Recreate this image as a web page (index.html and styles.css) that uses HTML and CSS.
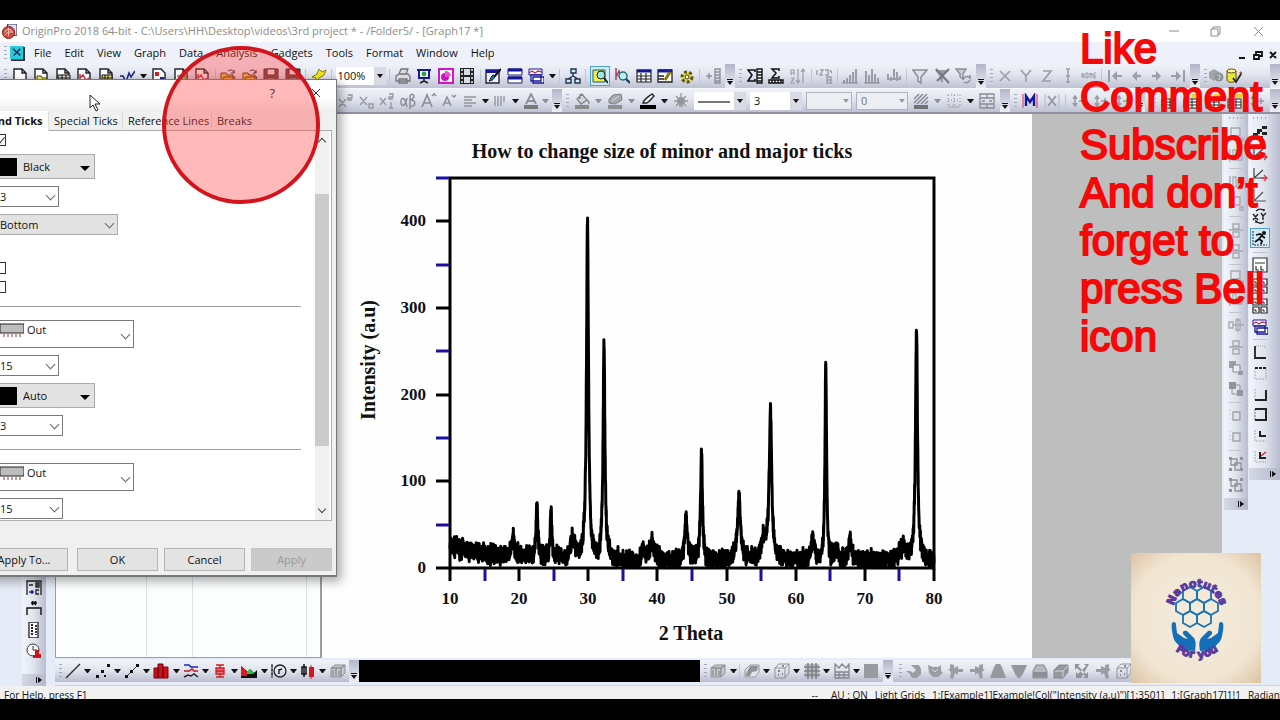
FILE: index.html
```html
<!DOCTYPE html>
<html lang="en">
<head>
<meta charset="utf-8">
<title>OriginPro 2018 64-bit</title>
<link rel="stylesheet" href="styles.css">
</head>
<body>
<svg class="defs" aria-hidden="true">
  <symbol id="doc" viewBox="0 0 16 16"><path d="M2 1h8l4 4v11H2zM10 1v4h4" fill="#fff" stroke="#222" stroke-width="1.4"/></symbol>
  <symbol id="docfolder" viewBox="0 0 16 16"><path d="M2 1h8l4 4v11H2zM10 1v4h4" fill="#fff" stroke="#222" stroke-width="1.4"/><path d="M4 8h4l1 2h5v5H4z" fill="#f0ee3a" stroke="#443" /></symbol>
  <symbol id="docbook" viewBox="0 0 16 16"><path d="M2 1h8l4 4v11H2zM10 1v4h4" fill="#fff" stroke="#222" stroke-width="1.4"/><path d="M3 7h12v8H3zM3 10h12M3 12h12M7 7v8M11 7v8" fill="#ddd" stroke="#111"/></symbol>
  <symbol id="docgraph" viewBox="0 0 16 16"><path d="M2 1h8l4 4v11H2zM10 1v4h4" fill="#fff" stroke="#222" stroke-width="1.4"/><path d="M4 6v8h9M4 10l3-3 3 5 3-2" fill="none" stroke="#c13048" stroke-width="1.4"/></symbol>
  <symbol id="docmatrix" viewBox="0 0 16 16"><path d="M2 1h8l4 4v11H2zM10 1v4h4" fill="#fff" stroke="#222" stroke-width="1.4"/><path d="M4 7h10v8H4zM4 10h10M7 7v8M10 7v8" fill="#f3f07a" stroke="#111"/></symbol>
  <symbol id="func" viewBox="0 0 16 16"><path d="M1 8h3l3 6 3-9 2 4 4-6" fill="none" stroke="#1a2a80" stroke-width="1.6"/></symbol>
  <symbol id="layout" viewBox="0 0 16 16"><path d="M2 1h8l4 4v11H2z" fill="#fff" stroke="#222" stroke-width="1.4"/><path d="M4 4h4v4H4z" fill="#c22"/><path d="M9 9h4v4H9z" fill="#228"/></symbol>
  <symbol id="docnote" viewBox="0 0 16 16"><path d="M2 1h8l4 4v11H2zM10 1v4h4" fill="#fff" stroke="#222" stroke-width="1.4"/><path d="M4 8h6M7 13l3-5h5l-3 5z" fill="#7ac08a" stroke="#243"/></symbol>
  <symbol id="open" viewBox="0 0 16 16"><path d="M1 5h5l1 2h6v8H1zM1 15l3-6h11l-2 6z" fill="#efc13a" stroke="#4b3300"/><path d="M8 3c3-2 5-1 6 2m0-3v3h-3" fill="none" stroke="#222"/></symbol>
  <symbol id="save" viewBox="0 0 16 16"><path d="M1 1h14v14H1z" fill="#7f3c3c" stroke="#222"/><path d="M4 1h8v6H4z" fill="#f7e7e7" stroke="#222"/><path d="M4 10h8v5H4z" fill="#ddd" stroke="#222"/></symbol>
  <symbol id="flash" viewBox="0 0 16 16"><path d="M1 9l5-3 2-5 3 3 4-2-2 5-5 3-4 5 1-5z" fill="#f0e51c" stroke="#8a7b00"/></symbol>
  <symbol id="print" viewBox="0 0 16 16"><path d="M4 6l2-5h7l-2 5M1 8l3-2h9l2 2v5H1zM4 11h8v4H4z" fill="#ddd" stroke="#73767c" stroke-width="1.3"/></symbol>
  <symbol id="slide" viewBox="0 0 16 16"><path d="M1 2h14M3 3v7h10V3" fill="#fff" stroke="#17179a" stroke-width="2"/><path d="M8 10v3M4 15l4-2 4 2" stroke="#222" stroke-width="1.6" fill="none"/><circle cx="8" cy="6" r="2.4" fill="#2aa54a"/></symbol>
  <symbol id="magenta" viewBox="0 0 16 16"><path d="M1 1h14v14H1z" fill="#fff" stroke="#d414c8" stroke-width="2"/><circle cx="7" cy="9" r="4" fill="#c916b6"/><path d="M7 9V3a6 6 0 016 5z" fill="#e64fd8"/></symbol>
  <symbol id="film" viewBox="0 0 16 16"><path d="M1 0h14v16H1z" fill="#222"/><path d="M5 1h6v6H5zM5 9h6v6H5z" fill="#d9dde4"/><path d="M3 1v14M13 1v14" stroke="#e5e7ee" stroke-width="1.6" stroke-dasharray="2 2"/></symbol>
  <symbol id="edit" viewBox="0 0 16 16"><path d="M1 2h13v13H1z" fill="#eef" stroke="#223" stroke-width="1.4"/><path d="M1 2h13v3H1z" fill="#17179a"/><path d="M16 1L9 9" stroke="#111" stroke-width="2"/><path d="M10 8c-1 4-4 5-6 5 2-2 2-5 4-6z" fill="#167f8e" stroke="#111"/></symbol>
  <symbol id="split" viewBox="0 0 16 16"><path d="M1 1h14v6H1zM1 9h14v6H1z" fill="#fff" stroke="#1b2065"/><path d="M1 2h14M1 10h14" stroke="#14159b" stroke-width="3"/></symbol>
  <symbol id="cascade" viewBox="0 0 16 16"><path d="M1 1h13v6H1z" fill="#fff" stroke="#17179a"/><path d="M1 5l3-2 3 2 3-2 4 1" fill="none" stroke="#c13060" stroke-width="1.4"/><path d="M3 7h10v6H3zM5 9h11v6H5z" fill="#fff" stroke="#17179a" stroke-width="1.3"/></symbol>
  <symbol id="tree" viewBox="0 0 16 16"><path d="M6 1h5v4H6zM1 11h5v4H1zM10 11h5v4h-5zM8 5v3M3 11l5-3 5 3" fill="#dfeaf0" stroke="#1b3550" stroke-width="1.4"/></symbol>
  <symbol id="find" viewBox="0 0 16 16"><path d="M1 2h12v12H1z" fill="#f0ee4a" stroke="#14597a"/><circle cx="9" cy="7" r="4" fill="#9de4e4" stroke="#222"/><path d="M12 10l4 5" stroke="#222" stroke-width="2"/></symbol>
  <symbol id="zoomg" viewBox="0 0 16 16"><path d="M2 0v12M2 9l3-6 2 7" fill="none" stroke="#a3405c" stroke-width="1.5"/><circle cx="9" cy="8" r="4" fill="#bfeef0" stroke="#286b79" stroke-width="1.5"/><path d="M12 11l4 4" stroke="#163545" stroke-width="2"/></symbol>
  <symbol id="table" viewBox="0 0 16 16"><path d="M1 2h14v12H1zM1 8h14M1 11h14M5 5v9M10 5v9" fill="#fff" stroke="#222" stroke-width="1.2"/><path d="M1 3h14" stroke="#17179a" stroke-width="3"/></symbol>
  <symbol id="tablepen" viewBox="0 0 16 16"><path d="M1 2h14v12H1zM1 8h6M1 11h6" fill="#fff" stroke="#222" stroke-width="1.3"/><path d="M1 3h14" stroke="#17179a" stroke-width="3"/><path d="M13 4l-5 8" stroke="#8a7b00" stroke-width="3"/></symbol>
  <symbol id="gear" viewBox="0 0 16 16"><circle cx="8" cy="9" r="5" fill="#ece63a" stroke="#5d5710" stroke-width="3" stroke-dasharray="3 2"/><circle cx="8" cy="9" r="2" fill="#fff" stroke="#333"/></symbol>
  <symbol id="addcol" viewBox="0 0 16 16"><path d="M1 8h6M4 5v6M10 1h5v14h-5zM10 4h5M10 7h5M10 10h5M10 13h5" fill="none" stroke="#8f9298" stroke-width="1.4"/></symbol>
  <symbol id="sumcol" viewBox="0 0 16 16"><path d="M8 4V2H1l4 5-4 6h7v-2" fill="none" stroke="#111" stroke-width="1.6"/><path d="M10 1h5v14h-5zM10 4h5M10 7h5M10 10h5M10 13h5" fill="#fff" stroke="#111" stroke-width="1.4"/></symbol>
  <symbol id="sumrow" viewBox="0 0 16 16"><path d="M11 3V1H4l4 4-4 5h7V8" fill="none" stroke="#111" stroke-width="1.5"/><path d="M1 12h14v3H1zM4 12v3M7 12v3M10 12v3M13 12v3" fill="#fff" stroke="#111" stroke-width="1.4"/></symbol>
  <symbol id="sort" viewBox="0 0 16 16"><path d="M1 7V2h3v5M1 5h3M1 10h3l-3 5h4M8 1v13M6 12l2 3 2-3M13 15V2M11 4l2-3 2 3" fill="none" stroke="#9b9ea5" stroke-width="1.2"/></symbol>
  <symbol id="fill" viewBox="0 0 16 16"><path d="M1 2v5M4 2h3L4 7h3M9 2h3v5H9M11 9h4v6h-4zM11 12h4M14 2l2 3" fill="none" stroke="#9b9ea5" stroke-width="1.4"/></symbol>
  <symbol id="stairs" viewBox="0 0 16 16"><path d="M2 15v-3M5 15v-5M8 15V7M11 15V4M14 15V1" stroke="#9b9ea5" stroke-width="2"/><path d="M0 15h16" stroke="#85888e"/></symbol>
  <symbol id="bars" viewBox="0 0 16 16"><path d="M2 15V3M5 15V7M8 15V1M11 15V6M14 15v-5" stroke="#9b9ea5" stroke-width="2"/><path d="M0 15h16" stroke="#85888e"/></symbol>
  <symbol id="hist" viewBox="0 0 16 16"><path d="M2 6v6M5 9v4M8 1v10M11 4v9M14 8v4M1 11h14" stroke="#9b9ea5" stroke-width="2"/></symbol>
  <symbol id="filter" viewBox="0 0 16 16"><path d="M1 2h14L9 9v6l-3-2V9z" fill="#dfe1e8" stroke="#8b8e95" stroke-width="1.5"/></symbol>
  <symbol id="nofilter" viewBox="0 0 16 16"><path d="M1 2h14L9 9v6l-3-2V9z" fill="#9b9ea5"/><path d="M2 1l13 14M15 1L3 13" stroke="#777a80" stroke-width="2"/></symbol>
  <symbol id="refilter" viewBox="0 0 16 16"><path d="M1 1h10L8 6v5l-3-2V6z" fill="#c9ccd3" stroke="#8b8e95" stroke-width="1.4"/><path d="M8 12a4 4 0 017-2v-3M15 12a4 4 0 01-6 2" fill="none" stroke="#8b8e95" stroke-width="1.5"/></symbol>
  <symbol id="lx" viewBox="0 0 16 16"><path d="M3 3l10 10M13 3L3 13" stroke="#9b9ea5" stroke-width="1.6"/></symbol>
  <symbol id="ly" viewBox="0 0 16 16"><path d="M3 2l5 6 5-6M8 8v6" fill="none" stroke="#9b9ea5" stroke-width="1.7"/></symbol>
  <symbol id="lz" viewBox="0 0 16 16"><path d="M4 3h8L4 13h8" fill="none" stroke="#9b9ea5" stroke-width="1.7"/></symbol>
  <symbol id="err" viewBox="0 0 16 16"><path d="M8 1v13M6 1h4M6 14h4M6 8h4" stroke="#9b9ea5" stroke-width="1.5"/></symbol>
  <symbol id="none" viewBox="0 0 16 16"><path d="M1 10V5l2 5V5M5 5h2v5H5zM9 10V5l1 2 1-2v5M15 5h-2v5h2M13 8h2" fill="none" stroke="#9b9ea5"/></symbol>
  <symbol id="first" viewBox="0 0 16 16"><path d="M2 2v12M15 8H6" stroke="#9b9ea5" stroke-width="2"/><path d="M10 3L5 8l5 5z" fill="#9b9ea5"/></symbol>
  <symbol id="prev" viewBox="0 0 16 16"><path d="M13 8H6" stroke="#9b9ea5" stroke-width="2.400"/><path d="M9 3L4 8l5 5z" fill="#9b9ea5"/></symbol>
  <symbol id="next" viewBox="0 0 16 16"><path d="M3 8h7" stroke="#9b9ea5" stroke-width="2.400"/><path d="M7 3l5 5-5 5z" fill="#9b9ea5"/></symbol>
  <symbol id="last" viewBox="0 0 16 16"><path d="M14 2v12M1 8h9" stroke="#9b9ea5" stroke-width="2"/><path d="M6 3l5 5-5 5z" fill="#9b9ea5"/></symbol>
  <symbol id="cubes" viewBox="0 0 16 16"><path d="M1 4l5-3 5 3v6l-5 3-5-3z" fill="#a2a4aa"/><circle cx="11" cy="9" r="4.5" fill="#8f9297"/><path d="M9 8c1-2 4-1 3 1l-1 1v2" stroke="#ddd" fill="none"/></symbol>
  <symbol id="db" viewBox="0 0 16 16"><path d="M1 3v9c0 3 9 3 9 0V3" fill="#ebe63a" stroke="#55510d"/><ellipse cx="5.500" cy="3" rx="4.500" ry="2" fill="#fbf98c" stroke="#55510d"/><path d="M7 10l3 4 5-8" fill="none" stroke="#222" stroke-width="1.8"/><path d="M14 4l2 2" stroke="#c33" stroke-width="2"/></symbol>

  <symbol id="sup" viewBox="0 0 16 16"><path d="M1 6l7 8M8 6l-7 8M10 2h4v3h-4v2h4" fill="none" stroke="#95989e" stroke-width="1.4"/></symbol>
  <symbol id="sub" viewBox="0 0 16 16"><path d="M1 4l7 8M8 4l-7 8M10 11h4v4h-4z" fill="none" stroke="#95989e" stroke-width="1.3"/></symbol>
  <symbol id="supsub" viewBox="0 0 16 16"><path d="M1 5l6 7M7 5l-6 7M10 1h4v3h-4v2h4M12 9v6M10 15h4" fill="none" stroke="#95989e" stroke-width="1.3"/></symbol>
  <symbol id="greek" viewBox="0 0 16 16"><path d="M7 5c-2 9-6 9-6 4s4-6 6 5M10 16V4c0-4 5-3 4 0l-3 3c5 0 5 7 0 6" fill="none" stroke="#8c8f95" stroke-width="1.5"/></symbol>
  <symbol id="abig" viewBox="0 0 16 16"><path d="M1 14L6 2l5 12M3 10h6M11 3l2-2 2 2" fill="none" stroke="#8c8f95" stroke-width="1.7"/></symbol>
  <symbol id="asmall" viewBox="0 0 16 16"><path d="M2 13L6 4l4 9M4 10h4M11 2l2 2 2-2" fill="none" stroke="#8c8f95" stroke-width="1.5"/></symbol>
  <symbol id="align" viewBox="0 0 16 16"><path d="M2 4h12M2 7h8M2 10h12M2 13h8" stroke="#92959b" stroke-width="1.4"/></symbol>
  <symbol id="cols" viewBox="0 0 16 16"><path d="M3 3v10M6 3v10M9 3v10M12 3v6" stroke="#92959b" stroke-width="1.4"/></symbol>
  <symbol id="acolor" viewBox="0 0 16 16"><path d="M3 11L8 1l5 10M5 8h6" fill="none" stroke="#8c8f95" stroke-width="1.8"/><path d="M1 12h14v4H1z" fill="#77797d"/></symbol>
  <symbol id="bucket" viewBox="0 0 16 16"><path d="M3 6l5-5 5 6-6 4zM6 1v5M12 7c2 0 3 1 3 4" fill="#d2d5dc" stroke="#85888e" stroke-width="1.4"/><path d="M1 12h14v4H1z" fill="#8c8a8c"/></symbol>
  <symbol id="palette" viewBox="0 0 16 16"><path d="M2 6l4-4 8-1 1 6-7 4-6-1z" fill="#a5a8ad" stroke="#7f8288"/><path d="M5 8l7-5" stroke="#ddd"/><path d="M1 12h14v4H1z" fill="#8c8f94"/></symbol>
  <symbol id="pen" viewBox="0 0 16 16"><path d="M3 10c1-4 5-6 9-9l2 2c-4 4-6 8-9 7z" fill="#fff" stroke="#222" stroke-width="1.4"/><path d="M0 12h16v4H0z" fill="#000"/></symbol>
  <symbol id="bulb" viewBox="0 0 16 16"><circle cx="8" cy="8" r="4" fill="#94979c"/><path d="M8 0v4M1 8h14M3 3l10 10M13 3L3 13M6 13h4" stroke="#94979c" stroke-width="1.3"/></symbol>
  <symbol id="hatch" viewBox="0 0 16 16"><path d="M1 6l5-5M1 10l9-9M4 11L14 1M8 11l7-7M12 11l3-3" stroke="#888b91" stroke-width="1.5"/><path d="M1 12h14v4H1z" fill="#707277"/></symbol>
  <symbol id="border" viewBox="0 0 16 16"><path d="M2 2h12v11H2zM8 2v11M2 7h12" fill="none" stroke="#888b91" stroke-dasharray="1 2"/><path d="M2 14h12" stroke="#aaa"/></symbol>
  <symbol id="merge" viewBox="0 0 16 16"><path d="M1 1h14v14H1zM1 5h14M1 11h14M8 1v4M8 11v4M3 8h3M10 8h3" fill="none" stroke="#898c92" stroke-width="1.3"/></symbol>
  <symbol id="mask" viewBox="0 0 16 16"><path d="M4 13V3l4 6 4-6v10" fill="none" stroke="#1415a0" stroke-width="2.400"/><path d="M1 1v14M15 1v14" stroke="#e22a50"/></symbol>
  <symbol id="unmask" viewBox="0 0 16 16"><path d="M4 3l8 10M12 3L4 13" stroke="#96999f" stroke-width="2"/><path d="M1 1v14M15 1v14" stroke="#b5b8be"/></symbol>
  <symbol id="updown" viewBox="0 0 16 16"><path d="M4 4v8M2 6l2-3 2 3M2 10l2 3 2-3M8 8h7M12 5v6" fill="none" stroke="#96999f" stroke-width="1.4"/></symbol>
  <symbol id="tbl" viewBox="0 0 16 16"><path d="M1 6h13v9H1zM1 9h13M1 12h13M5 6v9M9 6v9" fill="#fff" stroke="#222"/><path d="M9 1h6v4H9z" fill="#f5cf22"/></symbol>

  <symbol id="g1" viewBox="0 0 16 16"><path d="M3 2h9v8H3zM1 13h3M12 12h3v3h-3z" fill="none" stroke="#a6a9af" stroke-width="1.4"/></symbol>
  <symbol id="g2" viewBox="0 0 16 16"><path d="M2 2v13M5 3h3v10H5zM10 6h4v7h-4z" fill="none" stroke="#a6a9af" stroke-width="1.3"/></symbol>
  <symbol id="g3" viewBox="0 0 16 16"><path d="M5 2h6v5H5zM5 10h6v5H5zM1 8h14" fill="none" stroke="#a6a9af" stroke-width="1.4"/></symbol>
  <symbol id="g4" viewBox="0 0 16 16"><path d="M1 5h4v6H1zM8 3h4v10H8zM5 8h11M10 1v14" fill="#e7ebf2" stroke="#a6a9af" stroke-width="1.3"/></symbol>
  <symbol id="g5" viewBox="0 0 16 16"><path d="M1 1h7v7H1zM10 11h5v4h-5z" fill="#9c9ea3"/><path d="M5 5h7v7H5z" fill="#e9edf3" stroke="#85878c"/></symbol>
  <symbol id="g6" viewBox="0 0 16 16"><path d="M1 1h7v7H1zM9 9h6v6H9z" fill="#939599"/><path d="M8 4h4v5M4 8v5h5" fill="none" stroke="#939599"/></symbol>
  <symbol id="g7" viewBox="0 0 16 16"><path d="M5 4h7v8H5z" fill="none" stroke="#a0a3a8" stroke-width="1.4"/><path d="M2 2v12" stroke="#b7babf" stroke-dasharray="1 3"/></symbol>
  <symbol id="g8" viewBox="0 0 16 16"><path d="M3 3h6v6H3zM7 7h6v7H7z" fill="none" stroke="#8f9297" stroke-width="1.3"/><path d="M1 1h3v3H1zM12 1h3v3h-3zM1 12h3v3H1zM12 12h3v3h-3z" fill="#8f9297"/></symbol>

  <symbol id="checker" viewBox="0 0 16 16"><path d="M10 1h5v3h-5zM5 4h5v3H5zM10 7h5v3h-5zM1 8h5v3H1zM6 11h5v3H6zM5 7h3v2H5z" fill="#222"/></symbol>
  <symbol id="axes" viewBox="0 0 16 16"><path d="M2 1v10h12M2 11L11 3" fill="none" stroke="#444" stroke-width="1.2"/><path d="M9 11h6M12 8l3 3-3 3" fill="none" stroke="#d43a4a" stroke-width="1.3"/></symbol>
  <symbol id="axis" viewBox="0 0 16 16"><path d="M2 2v12h12M2 14L11 5" fill="none" stroke="#555" stroke-width="1.2"/></symbol>
  <symbol id="xy" viewBox="0 0 16 16"><path d="M1 6l5 6M6 6l-5 6M9 5l2 3 3-3M11 8v4M4 3c3-3 7-2 8 0V1M12 14c-3 2-6 1-8-1v2" fill="none" stroke="#222" stroke-width="1.4"/></symbol>
  <symbol id="run" viewBox="0 0 16 16"><path d="M1 1v14h14" stroke="#222" fill="none" stroke-dasharray="2 1"/><circle cx="12" cy="3" r="2" fill="#111"/><path d="M4 5l4-1 2 1-3 4 3 2-1 3M7 9l-4 3M10 6l3 2" fill="none" stroke="#111" stroke-width="1.8"/></symbol>
  <symbol id="panel1" viewBox="0 0 16 16"><path d="M1 1h14v14H1zM3 6h10M4 9v4h3M9 9v4h3" fill="#fff" stroke="#333" stroke-width="1.2"/></symbol>
  <symbol id="panel4" viewBox="0 0 16 16"><path d="M1 1h6v6H1zM9 1h6v6H9zM1 9h6v6H1zM9 9h6v6H9z" fill="#fff" stroke="#222" stroke-width="1.2"/><path d="M3 3v2h2M11 3v2h2M3 11v2h2M11 11v2h2" stroke="#222" fill="none"/></symbol>
  <symbol id="axl" viewBox="0 0 16 16"><path d="M13 4V2H3" fill="none" stroke="#aaa" stroke-dasharray="1 1"/><path d="M3 2v12h11" fill="none" stroke="#222" stroke-width="1.8"/></symbol>
  <symbol id="axt" viewBox="0 0 16 16"><path d="M3 3v11h11V3" fill="none" stroke="#aaa" stroke-dasharray="2 1"/><path d="M3 3h11" stroke="#222" stroke-width="2" stroke-dasharray="3 1"/></symbol>
  <symbol id="axb" viewBox="0 0 16 16"><path d="M3 3v11" stroke="#aaa" stroke-dasharray="2 1"/><path d="M3 14h11V4" fill="none" stroke="#222" stroke-width="2"/></symbol>
  <symbol id="axf" viewBox="0 0 16 16"><path d="M3 3v11" stroke="#666" stroke-dasharray="2 1"/><path d="M3 3h11v11H3" fill="none" stroke="#222" stroke-width="2"/></symbol>
  <symbol id="axc" viewBox="0 0 16 16"><path d="M3 3v11h11" fill="none" stroke="#aaa" stroke-dasharray="2 1"/><path d="M8 4v5h6" fill="none" stroke="#222" stroke-width="2"/></symbol>
  <symbol id="axd" viewBox="0 0 16 16"><path d="M3 3v11h11" fill="none" stroke="#aaa" stroke-dasharray="2 1"/><path d="M8 4v6h6" fill="none" stroke="#222" stroke-width="2"/><path d="M9 8l5-4" stroke="#d22" stroke-width="1.5"/></symbol>

  <symbol id="legend" viewBox="0 0 16 16"><path d="M1 15V1h14v14M3 5h4M10 3h3v4h-3zM10 5h3M13 10h-3v4h3" fill="none" stroke="#222" stroke-width="1.3"/><path d="M3 12h5M6 10v4" stroke="#1721b5" stroke-width="1.6"/></symbol>
  <symbol id="star" viewBox="0 0 16 16"><path d="M5 2h6M6 0l4 4M10 0L6 4" stroke="#111" stroke-width="1.4"/><path d="M1 14V7h14v7" fill="none" stroke="#111" stroke-width="1.4"/></symbol>
  <symbol id="scale" viewBox="0 0 16 16"><path d="M3 0h9v16H3z" fill="#fff" stroke="#222" stroke-width="1.3"/><path d="M5 3h2M5 6h3M5 9h2M5 12h3M10 3v10" stroke="#222" stroke-width="1.8" stroke-dasharray="2 1"/></symbol>
  <symbol id="clock" viewBox="0 0 16 16"><circle cx="7" cy="7" r="6" fill="#fff" stroke="#333"/><path d="M7 3v4h4" stroke="#333" fill="none"/><path d="M9 7h4v4h2v4H7v-3h2z" fill="#c8141c"/></symbol>

  <symbol id="line" viewBox="0 0 16 16"><path d="M1 15L15 1" stroke="#333" stroke-width="1.4"/></symbol>
  <symbol id="scatter" viewBox="0 0 16 16"><path d="M1 12h3v3H1zM6 7h3v3H6zM9 12h2v2H9zM12 1h3v3h-3z" fill="#111"/></symbol>
  <symbol id="linesym" viewBox="0 0 16 16"><path d="M2 14L14 2" stroke="#333"/><path d="M1 12h3v3H1zM6 7h3v3H6zM12 1h3v3h-3z" fill="#111"/></symbol>
  <symbol id="column" viewBox="0 0 16 16"><path d="M1 5h4v10H1zM5 1h5v14H5zM10 4h5v11h-5z" fill="#c9131b" stroke="#701" /></symbol>
  <symbol id="multi" viewBox="0 0 16 16"><path d="M1 2h5l2 2h7" stroke="#1a27ba" fill="none" stroke-width="1.5"/><path d="M1 8h5l3-2 2 2h4" stroke="#c8141c" fill="none" stroke-width="1.5"/><path d="M1 14l4-2 3 1 3-2 4 3" stroke="#222" fill="none" stroke-width="1.5"/></symbol>
  <symbol id="box" viewBox="0 0 16 16"><path d="M4 2h8M8 2v3M4 5h8v6H4zM4 8h8M8 11v3M4 14h8" fill="#e77" stroke="#cf1b22" stroke-width="1.3"/></symbol>
  <symbol id="area" viewBox="0 0 16 16"><path d="M0 15V3l7 6 2-3 4 4 3-3v8z" fill="#111"/><path d="M0 3l6 6v4H0z" fill="#e01921"/><path d="M6 9l3-3 4 5H6z" fill="#24c936"/></symbol>
  <symbol id="polar" viewBox="0 0 16 16"><path d="M1 1v14M0 3h2M0 7h2M0 11h2" stroke="#222"/><circle cx="9" cy="8" r="6" fill="none" stroke="#222" stroke-width="1.3"/><path d="M8 11V6M8 7l3-1" stroke="#222" fill="none" stroke-width="1.4"/></symbol>
  <symbol id="candle" viewBox="0 0 16 16"><path d="M4 1v13M2 4h4v7H2z" fill="#fff" stroke="#111" stroke-width="1.5"/><path d="M11 2v14" stroke="#d3161d"/><path d="M9 4h5v10H9z" fill="#d3161d"/></symbol>
  <symbol id="cube3" viewBox="0 0 16 16"><path d="M1 5l4-3h10v8l-4 4H1z" fill="#c6c8cc" stroke="#8c8f94"/><path d="M3 13V7M6 13V5M9 13V8M11 5v9M1 5h10l4-3" stroke="#8c8f94" fill="none" stroke-width="1.4"/></symbol>
  <symbol id="surf" viewBox="0 0 16 16"><path d="M1 7l5-5h9v7l-4 5H1z" fill="#e3e5ea" stroke="#909398"/><path d="M2 11l4-8h8l-1 5-5 1-2 4H2z" fill="#8f9297"/></symbol>
  <symbol id="dots3" viewBox="0 0 16 16"><path d="M1 5l4-4h10v9l-4 5H1zM1 5h10v10M11 5l4-4" fill="none" stroke="#909398"/><path d="M4 8h2M8 11h1M4 12h1M8 3h2" stroke="#85888d" stroke-width="2"/></symbol>
  <symbol id="heat" viewBox="0 0 16 16"><path d="M1 1h14v14H1z" fill="#b8babf"/><path d="M4 0v16M8 0v16M12 0v16M0 4h16M0 8h16M0 12h16" stroke="#7e8186" stroke-width="1.5"/></symbol>
  <symbol id="wave" viewBox="0 0 16 16"><path d="M1 9V1l4 4 3-4 4 4 3-4v8M1 9h14v6H1zM1 12h14M5 9v6M10 9v6" fill="none" stroke="#85888d" stroke-width="1.3"/></symbol>
  <symbol id="solid" viewBox="0 0 16 16"><path d="M1 1h14v14H1z" fill="#999ba0"/></symbol>
  <symbol id="rotl" viewBox="0 0 16 16"><path d="M5 2h8l2 4v5l-4 4H6l-2-4-4-3h4l3 2 3-3z" fill="#9b9da2"/></symbol>
  <symbol id="rotr" viewBox="0 0 16 16"><path d="M1 2l5 2h5l3-2v6l2 2-5 4H6l-4-4z" fill="#9b9da2"/><path d="M5 6l3 3 3-3" fill="none" stroke="#d9dbe1"/></symbol>
  <symbol id="tiltl" viewBox="0 0 16 16"><path d="M2 1l4 1v3l4-2v3h5v3h-5v3L7 10l-2 6-3-1 1-6-3-3h2z" fill="#9b9da2"/></symbol>
  <symbol id="tiltr" viewBox="0 0 16 16"><path d="M14 1l-4 1v3L6 3v3H1v3h5v3l3-2 2 6 3-1-1-6 3-3h-2z" fill="#9b9da2"/></symbol>
  <symbol id="persp" viewBox="0 0 16 16"><path d="M4 4l2-3h4l2 3 4 11H0z" fill="#96989d"/></symbol>
  <symbol id="trap" viewBox="0 0 16 16"><path d="M0 2h16l-4 9-3 4H7l-3-4z" fill="#96989d"/></symbol>
  <symbol id="boxup" viewBox="0 0 16 16"><path d="M1 8l3-6h8l3 6v7H1z" fill="#b5b7bc" stroke="#85888d"/><path d="M1 9h14v5H1z" fill="#8d9095"/></symbol>
  <symbol id="boxr" viewBox="0 0 16 16"><path d="M1 7l5-5h9v7l-5 6H1z" fill="#96989d" stroke="#85888d"/><path d="M2 8h8v6M10 8l5-5" fill="none" stroke="#d5d7dc"/></symbol>
  <symbol id="expand" viewBox="0 0 16 16"><path d="M1 1h5L4 3l8 8 2-2v6H9l2-2-8-8-2 2zM15 1h-5l2 2-8 8-2-2v6h5" fill="#919398"/></symbol>
</svg>

<div class="app">
  <header class="title">
    <svg class="logo-s" viewBox="0 0 16 16"><path d="M6 0h10v12H6z" fill="#d9e2fb" stroke="#224"/><circle cx="7" cy="9" r="6.500" fill="#d9483c" stroke="#7d1815"/><path d="M3 9c2-5 7-4 8 0M3 12c3-4 5-4 8-3M7 4v9" fill="none" stroke="#fbd3c8"/></svg>
    <span>OriginPro 2018 64-bit - C:\Users\HH\Desktop\videos\3rd project * - /Folder5/ - [Graph17 *]</span>
    <svg class="winctl" viewBox="0 0 100 14"><path d="M1 7h10M43 5h7v7h-7zM45 5V3h7v7h-2M86 3l9 9M95 3l-9 9" fill="none" stroke="#8a8a8a"/></svg>
  </header>
  <nav class="menu">
    <span class="grip"></span>
    <svg class="logo-s" viewBox="0 0 16 16"><path d="M0 0h15v14H0z" fill="#2cc9dc"/><path d="M1 15h14V1" fill="none" stroke="#333" stroke-width="2"/><path d="M3 3l8 7M11 3l-7 7" stroke="#225" stroke-width="1.5"/></svg>
    <a href="#">File</a><a href="#">Edit</a><a href="#">View</a><a href="#">Graph</a><a href="#">Data</a><a href="#">Analysis</a><a href="#">Gadgets</a><a href="#">Tools</a><a href="#">Format</a><a href="#">Window</a><a href="#">Help</a>
    <svg class="mdictl" viewBox="0 0 40 12"><path d="M1 9h6M16 6h5v4h-5zM18 6V3h6v4h-3M32 3l6 6M38 3l-6 6" fill="none" stroke="#111" stroke-width="1.800"/></svg>
  </nav>
  <div class="row row1">
    <div class="group">
      <span class="tools" data-tools="grip doc docfolder docbook docgraph docmatrix func v layout docnote docgraph | open open save save | flash |"></span>
      <span class="pick zoom"><select aria-label="Zoom"><option>100%</option></select></span>
      <span class="tools" data-tools="| print slide magenta film | edit split cascade v | tree | find* zoomg table tablepen gear | addcol more"></span>
    </div>
    <div class="group"><span class="tools" data-tools="grip sumcol sumrow sort | fill | stairs bars hist | filter nofilter refilter more"></span></div>
    <div class="group"><span class="tools" data-tools="grip lx ly lz err none | first prev next last more"></span></div>
    <div class="group"><span class="tools" data-tools="grip cubes db"></span><span class="fill"></span><span class="tools" data-tools="more"></span></div>
  </div>
  <div class="row row2">
    <div class="group"></div>
    <div class="group"><span class="tools" data-tools="sup sub supsub greek abig asmall align v cols v acolor w more"></span></div>
    <div class="group">
      <span class="tools" data-tools="grip bucket w palette w pen v bulb"></span>
      <span class="pick stroke"><select aria-label="Line style"><option></option></select></span>
      <span class="pick"><select aria-label="Line width"><option>3</option></select></span>
      <span class="pick off narrow"><select aria-label="Pattern" disabled><option></option></select></span>
      <span class="pick off"><select aria-label="Pattern width" disabled><option>0</option></select></span>
      <span class="tools" data-tools="hatch w border v merge more"></span>
    </div>
    <div class="group"><span class="tools" data-tools="grip mask unmask | updown updown updown more grip tbl tbl tbl tbl updown more"></span></div>
  </div>

  <div class="body">
    <aside class="left">
      <div class="vbar"><span class="tools" data-tools="legend star scale clock"></span><span class="vend"></span></div>
    </aside>
    <div class="main">
      <div class="middle">
        <div class="explorer"><i></i><i></i><i></i></div>
        <div class="page">
          <svg id="plot" viewBox="0 0 710 544" role="img" aria-label="XRD pattern"></svg>
        </div>
        <div class="canvas"></div>
        <div class="right">
          <div class="vbar v1"><span class="tools" data-tools="hgrip g1 g2 - g2 g1 - g3 g3 - g1 g2 - g4 g3 g5 g6 - g7 g7 - g8 g8"></span><span class="vend"></span></div>
          <div class="vbar v2"><span class="tools" data-tools="hgrip checker axes axes axis xy run* - panel1 panel4 panel4 cascade - axl axt axb axf axc axd"></span><span class="vend"></span></div>
        </div>
      </div>
      <div class="bottom">
        <div class="group b1"><span class="tools" data-tools="grip line v scatter v linesym v column v multi v box v area v polar v candle v cube3 more"></span></div>
        <div class="blackout"></div>
        <div class="group b2"><span class="tools" data-tools="grip cube3 v | surf v dots3 v heat v wave v solid more"></span></div>
        <div class="group b3"><span class="tools" data-tools="grip rotl rotr tiltl tiltr persp trap boxup boxr expand tiltr dots3 solid solid"></span></div>
        <div class="fill"></div>
      </div>
    </div>
  </div>
  <footer class="status">
    <span class="help">For Help, press F1</span>
    <span>--</span><span class="au">AU : ON</span><span>Light Grids</span><span>1:[Example1]Example!Col("Intensity (a,u)")[1:3501]</span><span>1:[Graph17]1!1</span><span>Radian</span>
  </footer>
</div>

<section class="dialog" aria-label="X Axis">
  <div class="dtitle"><button>?</button><button aria-label="Close"><svg viewBox="0 0 10 10"><path d="M1 1l8 8M9 1L1 9" stroke="#333"/></svg></button></div>
  <div class="tabs"><button class="on">Line and Ticks</button><button>Special Ticks</button><button class="wide">Reference Lines</button><button>Breaks</button></div>
  <div class="dpanel">
    <div class="form">
      <input class="chk first" type="checkbox" aria-label="Show line" checked>
      <span class="color"><select aria-label="Line color"><option>Black</option></select></span>
      <span class="combo w99"><select aria-label="Thickness"><option>3</option></select></span>
      <span class="combo grey w158"><select aria-label="Axis position"><option>Bottom</option></select></span>
      <input class="chk gap" type="checkbox" aria-label="Use only for line">
      <input class="chk" type="checkbox" aria-label="Apply to others">
      <hr>
      <span class="combo tick w174"><select aria-label="Major ticks style"><option>Out</option></select><svg viewBox="0 0 24 14"><path d="M0 1h24v9H0z" fill="#bdbdbd" stroke="#222"/><path d="M4 11v3M8 11v3M12 11v3M16 11v3M20 11v3" stroke="#933"/></svg></span>
      <span class="combo w99"><select aria-label="Major length"><option>15</option></select></span>
      <span class="color"><select aria-label="Tick color"><option>Auto</option></select></span>
      <span class="combo w103"><select aria-label="Tick thickness"><option>3</option></select></span>
      <hr>
      <span class="combo tick w174"><select aria-label="Minor ticks style"><option>Out</option></select><svg viewBox="0 0 24 14"><path d="M0 1h24v9H0z" fill="#bdbdbd" stroke="#222"/><path d="M4 11v3M8 11v3M12 11v3M16 11v3M20 11v3" stroke="#933"/></svg></span>
      <span class="combo w103"><select aria-label="Minor length"><option>15</option></select></span>
    </div>
    <div class="scroll"><i class="up"></i><b></b><i class="down"></i></div>
  </div>
  <div class="dbtns"><button>Apply To...</button><button>OK</button><button>Cancel</button><button disabled>Apply</button></div>
</section>

<div class="spot"></div>
<svg class="cursor" viewBox="0 0 12 18"><path d="M1 1v13l3-3 3 6 2-1-3-6h5z" fill="#fff" stroke="#222"/></svg>
<p class="callout">Like<br>Comment<br>Subscribe<br>And don’t<br>forget to<br>press Bell<br>icon</p>

<svg class="brand" viewBox="0 0 130 130">
  <defs>
    <radialGradient id="paper" r=".75"><stop offset="0" stop-color="#f5ecdd"/><stop offset=".65" stop-color="#f1e5d2"/><stop offset="1" stop-color="#d8bc98"/></radialGradient>
    <path id="arc1" d="M42 58A24 24 0 0 1 90 58"/><path id="arc2" d="M38 91A35 35 0 0 0 94 91"/>
    <path id="hex" d="M0-8l7 4v8l-7 4-7-4v-8z"/>
  </defs>
  <rect width="130" height="130" fill="url(#paper)"/>
  <g fill="none" stroke="#1b74b3" stroke-width="1.800"><use href="#hex" x="59" y="42"/><use href="#hex" x="73" y="42"/><use href="#hex" x="52" y="54"/><use href="#hex" x="66" y="54"/><use href="#hex" x="80" y="54"/><use href="#hex" x="59" y="66"/><use href="#hex" x="73" y="66"/></g>
  <path id="hand" d="M41 70c2-2 4-1 4 2l1 8 7 5 4 1-5-5c-1-3 2-4 4-3l7 7c2 3 2 7 1 13l-12-1c-3-5-9-7-10-14-1-5-2-10-1-13z" fill="#126fb8"/>
  <use href="#hand" transform="matrix(-1 0 0 1 133 0)"/>
  <g class="arc"><text><textPath href="#arc1" startOffset="50%">Nanotutes</textPath></text><text><textPath href="#arc2" startOffset="50%">For you</textPath></text></g>
</svg>
<script src="app.js"></script>
</body>
</html>
```
FILE: styles.css
```css
* { box-sizing: border-box; }
body { margin: 0; background: #000; color: #111; font: 11px/16px "Open Sans", "Noto Sans", sans-serif; position: relative; overflow: hidden; }
button, select, input { font: inherit; color: inherit; margin: 0; border-radius: 0; }
button { padding: 0; border: 0; background: none; }
a { color: inherit; text-decoration: none; }
.defs { position: absolute; width: 0; height: 0; }
.fill { flex: 1; }

.app { min-height: 100vh; padding: 20px 0 21px; display: flex; flex-direction: column; }
.title { height: 22px; background: #fff; display: flex; align-items: center; gap: 5px; padding-left: 2px; color: #8c8c8c; }
.title span { flex: 1; white-space: nowrap; }
.logo-s { width: 15px; height: 15px; flex: none; }
.winctl { width: 100px; height: 14px; margin-right: 12px; }
.menu { height: 22px; background: #eef1fa; display: flex; align-items: center; }
.menu .logo-s { margin: 0 9px 0 3px; }
.menu a { margin-right: 13px; }
.mdictl { width: 40px; height: 12px; margin: 4px 2px 0 auto; }

.row { display: grid; background: linear-gradient(#eff2f9, #e2e5ef 45%, #bfc2d2); }
.row1 { height: 24px; grid-template-columns: 735fr 251fr 214fr 80fr; }
.row2 { height: 26px; grid-template-columns: 337fr 225fr 448fr 270fr; border-bottom: 2px solid #8e90a0; border-top: 1px solid #f8f9fd; }
.group { display: flex; align-items: center; justify-content: space-between; min-width: 0; }
.tools { display: contents; }
.t { flex: none; width: 18px; height: 20px; display: flex; align-items: center; justify-content: center; }
.t svg { width: 16px; height: 16px; }
.t.on { border: 1px solid #4ba0d0; background: #d5e9f7; width: 20px; }
.grip { flex: none; width: 3px; height: 14px; margin-left: 4px; background: repeating-linear-gradient(#a4a8b8 0 1px, transparent 1px 4px); }
.sep { flex: none; width: 1px; height: 14px; background: #c2c5d0; }
.arr { flex: none; width: 7px; border: solid transparent; border-width: 4px 3px 0; border-top-color: #111; }
.arr.dim { border-top-color: #8d9097; }
.more { flex: none; align-self: stretch; width: 10px; display: flex; flex-direction: column; justify-content: flex-end; align-items: center; gap: 1px; padding-bottom: 3px; background: linear-gradient(#b2b6ca, #ecedf4); }
.more::before { content: ""; width: 6px; height: 1px; background: #111; }
.more::after { content: ""; border: solid transparent; border-width: 4px 3px 0; border-top-color: #111; }

.pick { position: relative; width: 52px; height: 18px; }
.pick.zoom { width: 50px; }
.pick.narrow { width: 46px; }
.pick select { appearance: none; width: 100%; height: 100%; border: 0; background: #fff; padding: 0 4px; line-height: 16px; }
.pick.zoom select { padding: 0 0 0 2px; }
.pick::after { content: ""; position: absolute; right: 3px; top: 7px; border: solid transparent; border-width: 4px 3px 0; border-top-color: #111; }
.pick::before { content: ""; position: absolute; right: 0; top: 0; width: 12px; height: 100%; background: #d8dae4; }
.pick.off select { border: 1px solid #b0b3bd; background: #eceef4; color: #777; opacity: 1; }
.pick.off::before { display: none; }
.pick.off::after { border-top-color: #999; }
.pick.stroke select { background: linear-gradient(#777, #777) 4px 9px / 32px 2px no-repeat #fff; }

.body { flex: 1; display: grid; grid-template-columns: 55px 1fr; background: #e5ebf7; }
.left { display: flex; align-items: stretch; padding-left: 22px; }
.left .vbar { width: 24px; justify-content: flex-end; }
.left .t { margin-bottom: 1px; }
.vbar { display: flex; flex-direction: column; align-items: center; background: linear-gradient(90deg, #f2f5fb, #dfe3ed 50%, #b9bdcf); border-radius: 0 0 4px 4px; }
.vend { flex: none; width: 100%; height: 12px; background: linear-gradient(90deg, #d5d9e4, #b4b8cb); display: flex; justify-content: flex-end; align-items: center; gap: 1px; padding-right: 4px; }
.left .vend { margin-top: 12px; }
.vend::before { content: ""; width: 1px; height: 6px; background: #111; }
.vend::after { content: ""; border: solid transparent; border-width: 3px 0 3px 4px; border-left-color: #111; }
.main { display: flex; flex-direction: column; min-width: 0; }
.middle { flex: 1; display: flex; min-height: 544px; }
.explorer { flex: none; width: 267px; display: grid; grid-template-columns: 91px 46px 114px; background: #fdfefe; border: solid #9b9da4; border-width: 0 2px 1px 1px; }
.explorer i { border-right: 1px solid #dbe5ea; }
.page { flex: 710; background: #fefefe; min-width: 0; display: flex; }
#plot { width: 100%; }
.canvas { flex: 190; background: #bebebe; }
.right { flex: none; width: 58px; display: flex; align-items: flex-start; padding-left: 2px; gap: 1px; }
.v1 { width: 24px; height: 396px; }
.v2 { flex: 1; height: 366px; align-items: flex-start; }
.right .vbar { justify-content: space-between; }
.v2 .t { margin-left: 2px; }
.v2 .hgrip, .v2 .hsep { margin-left: 4px; }
.right .t { height: 17px; }
.right .t.on { height: 20px; margin-left: 1px; }
.hgrip { width: 14px; height: 2px; margin: 3px 0 2px; background: repeating-linear-gradient(90deg, #a4a8b8 0 1px, transparent 1px 4px); flex: none; }
.hsep { width: 14px; height: 1px; background: #c2c5d0; flex: none; }

.bottom { height: 28px; display: flex; padding: 2px 0 3px; align-items: stretch; border-bottom: 1px solid #cfd3dc; }
.bottom .group { background: linear-gradient(#f1f3fa, #e0e3ed 50%, #b9bccd); }
.b1 { width: 304px; }
.blackout { width: 341px; background: #000; }
.b2 { width: 193px; }
.b3 { width: 282px; }
.b3 .grip { margin-left: 6px; }

.status { height: 13px; overflow: hidden; background: #f1f1f1; display: flex; gap: 7px; font-size: 10px; line-height: 18px; padding-left: 4px; white-space: nowrap; }
.status .help { flex: 1; }
.status .au { margin-left: 6px; }

.dialog { position: absolute; left: -41px; top: 79px; width: 378px; background: #f0f0f0; border: solid #77787c; border-width: 1px 1px 2px; box-shadow: 4px 4px 10px rgba(0, 0, 0, .35); }
.dtitle { height: 31px; background: linear-gradient(#fff 55%, #f0f0f0); display: flex; justify-content: flex-end; align-items: center; gap: 36px; padding: 0 15px 5px 0; font-size: 13px; }
.dtitle svg { display: block; width: 10px; height: 10px; }
.tabs { height: 20px; display: flex; }
.tabs button { width: 74px; text-align: left; white-space: nowrap; padding: 0 0 0 5px; border-right: 1px solid #ddd; border-bottom: 1px solid #aaa; }
.tabs button.wide { width: 89px; }
.tabs button.on { width: 89px; text-align: right; font-weight: 700; background: #fff; border-bottom: 0; padding-right: 6px; }
.tabs button:last-child { border-right: 0; flex: 1; margin-right: 4px; }
.dpanel { background: #fff; margin-right: 4px; border: solid #b0b0b0; border-width: 0 1px 1px 0; display: flex; justify-content: space-between; padding: 0 2px 0 0; }
.form { display: flex; flex-direction: column; gap: 7px; align-items: flex-start; padding: 3px 0 1px; width: 341px; }
.chk { appearance: none; width: 12px; height: 12px; border: 1px solid #333; background: #fff; margin-left: 34px; position: relative; }
.chk.first { margin-bottom: 1px; }
.chk.gap { margin-top: 20px; }
.chk:checked::after { content: ""; position: absolute; left: 3px; top: 0; width: 4px; height: 7px; border: solid #222; border-width: 0 1px 1px 0; transform: rotate(40deg); }
.form hr { width: 341px; height: 1px; border: 0; background: #a0a0a0; margin: 6px 0; }
.combo, .color { position: relative; display: block; height: 21px; }
.combo select, .color select { appearance: none; width: 100%; height: 100%; padding: 0 0 0 39px; border: 1px solid #7a7a7a; background: #fff; line-height: 16px; }
.combo.grey select, .color select { background: #e2e2e2; border-color: #aaa; }
.w99 { width: 99px; }
.w103 { width: 103px; }
.w158 { width: 158px; }
.w174 { width: 174px; }
.combo::after { content: ""; position: absolute; right: 5px; top: 6px; width: 6px; height: 6px; border: solid #666; border-width: 0 1px 1px 0; transform: rotate(45deg); }
.combo.tick { height: 28px; }
.combo.tick select { padding: 0 0 8px 66px; }
.combo.tick svg { position: absolute; left: 40px; top: 3px; width: 24px; height: 14px; }
.combo.tick::after { top: 11px; }
.color { width: 135px; height: 25px; }
.color select { padding-left: 62px; }
.color::before { content: ""; position: absolute; left: 34px; top: 4px; width: 23px; height: 18px; background: #000; }
.color::after { content: ""; position: absolute; right: 5px; top: 12px; border: solid transparent; border-width: 5px 5px 0; border-top-color: #000; }
.scroll { width: 14px; background: #f0f0f0; display: flex; flex-direction: column; align-items: center; justify-content: space-between; padding: 8px 0; }
.scroll b { width: 100%; height: 252px; margin-top: 16px; margin-bottom: 28px; background: #cbcbcb; }
.scroll i { width: 6px; height: 6px; border: solid #444; border-width: 1px 0 0 1px; transform: rotate(45deg); }
.scroll .down { transform: rotate(225deg); }
.dbtns { display: flex; justify-content: flex-end; gap: 6px; padding: 27px 4px 4px 0; }
.dbtns button { width: 81px; height: 23px; background: #e3e3e3; border: 1px solid #b5b5b5; }
.dbtns button:first-child { margin-right: 3px; width: 88px; }
.dbtns button:disabled { background: #cacaca; color: #999; border-color: #c5c5c5; }

.spot { position: absolute; left: 162px; top: 46px; width: 158px; height: 158px; border: 4px solid #d3141c; border-radius: 50%; background: rgba(255, 70, 70, .38); }
.cursor { position: absolute; left: 89px; top: 94px; width: 12px; height: 18px; }
.callout { position: absolute; left: 1080px; top: 25px; margin: 0; font: 42px/48px "Liberation Sans", Arial, sans-serif; color: #f50808; -webkit-text-stroke: 2px #f50808; white-space: nowrap; }
.brand { position: absolute; left: 1131px; top: 553px; width: 130px; height: 130px; }
.arc text { font: bold 11px "DejaVu Sans", sans-serif; fill: #5a3aa0; stroke: #5a3aa0; stroke-width: 1px; text-anchor: middle; }

.frame { fill: none; stroke: #000; stroke-width: 3; }
.major { stroke: #000; stroke-width: 3; }
.minor { stroke: #1d10a0; stroke-width: 3; }
.trace { fill: none; stroke: #000; stroke-width: 3; stroke-linejoin: round; }
#plot text { font: bold 17px "Liberation Serif", "Times New Roman", serif; text-anchor: middle; fill: #111; }
#plot .y { text-anchor: end; }
#plot .lab { font-size: 20px; }
```
FILE: app.js
```js
const NS = 'http://www.w3.org/2000/svg';

// Toolbars: each token is an icon id, a divider or a drop-down marker.
const marks = { '|': 'sep', '-': 'hsep', v: 'arr', w: 'arr dim', more: 'more', grip: 'grip', hgrip: 'hgrip' };
document.querySelectorAll('[data-tools]').forEach(host => {
  host.innerHTML = host.dataset.tools.split(' ').map(token => {
    if (marks[token]) return `<span class="${marks[token]}"></span>`;
    const active = token.endsWith('*');
    const id = token.replace('*', '');
    return `<button class="t${active ? ' on' : ''}" aria-label="${id}"><svg><use href="#${id}"/></svg></button>`;
  }).join('');
});

// Plot area inside the 710 x 544 graph page.
const plot = document.getElementById('plot');
const left = 128, right = 612, top0 = 64, base = 454;
const add = (name, attrs, text) => {
  const el = document.createElementNS(NS, name);
  for (const key in attrs) el.setAttribute(key, attrs[key]);
  if (text !== undefined) el.textContent = text;
  plot.appendChild(el);
};

// [centre, height, half width]
const peaks = [[191, 18, 2], [215, 55, 1], [229, 50, 1], [251, 18, 3], [265.5, 337, 1.2], [282, 214, 1.1],
  [321, 10, 1.5], [330, 19, 2.2], [364, 45, 1.5], [379.5, 111, 1.1], [417, 61, 2], [442, 20, 4], [448.5, 149, 1.4],
  [491, 21, 2], [503.8, 200, 0.9], [514, 10, 2], [528, 19, 1.8], [581, 14, 4], [594.5, 232, 1.2]];
let seed = 7;
const random = () => (seed = (seed * 16807) % 2147483647) / 2147483647;
let d = '';
for (let i = 0; i <= 3500; i++) {
  const x = left + i * (right - left) / 3500;
  let level = 7 + 15 * Math.exp(-(x - left) / 50);
  for (const [c, h, w] of peaks) level += h / (1 + ((x - c) / w) ** 2);
  level += (random() + random() + random() - 1.5) * 9;
  d += (i ? 'L' : 'M') + x.toFixed(1) + ' ' + Math.min(base - 1, base - level).toFixed(1);
}
add('path', { class: 'trace', d });
add('rect', { class: 'frame', x: left, y: top0, width: right - left, height: base - top0 });

for (let v = 0; v <= 450; v += 50) {
  const y = Math.round(base - v * (base - top0) / 450);
  add('path', { class: v % 100 ? 'minor' : 'major', d: `M114 ${y}H127` });
  if (v % 100 === 0) add('text', { class: 'y', x: 104, y: y + 5 }, v);
}
for (let v = 10; v <= 80; v += 5) {
  const x = Math.round(left + (v - 10) * (right - left) / 70);
  add('path', { class: v % 10 ? 'minor' : 'major', d: `M${x} 455V467` });
  if (v % 10 === 0) add('text', { x, y: 490 }, v);
}
add('text', { class: 'lab', x: 340, y: 44 }, 'How to change size of minor and major ticks');
add('text', { class: 'lab', x: 369, y: 526 }, '2 Theta');
add('text', { class: 'lab', transform: 'translate(53 246) rotate(-90)' }, 'Intensity (a.u)');
```
